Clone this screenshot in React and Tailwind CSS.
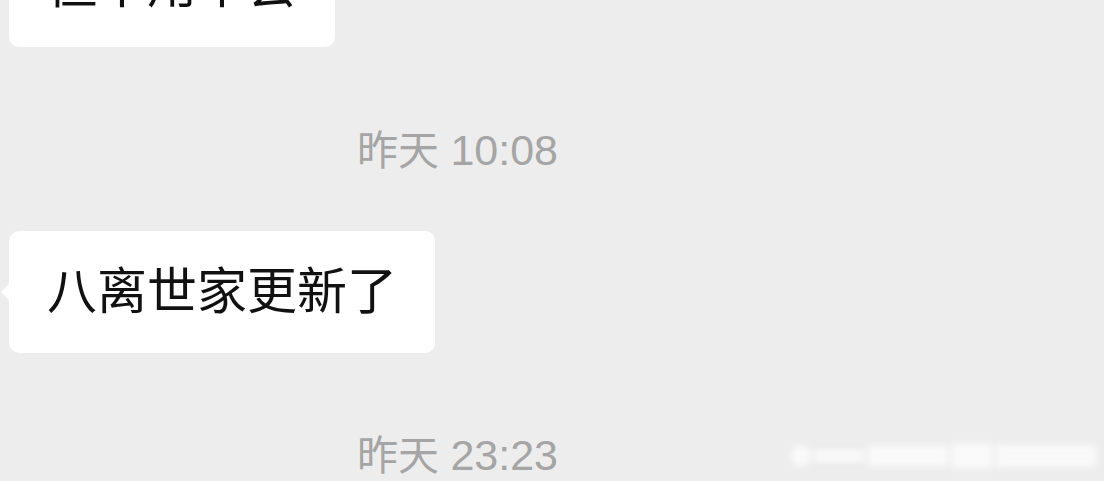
export default function App() {
  const cjk = { fontFamily: '"Liberation Sans", "Noto Sans CJK SC", sans-serif' };
  return (
    <div
      className="relative w-[1104px] h-[481px] overflow-hidden bg-[#ededed] flex flex-col items-start"
      style={cjk}
    >
      <div className="ml-[9px] mt-[-75px] rounded-[10px] bg-white px-[38px] py-[36px] text-[50px] leading-[50px] text-[#111111]">
        但不用不会
      </div>

      <div className="ml-[357px] mt-[82px] text-[41px] leading-[42px] text-[#a5a5a5] whitespace-nowrap">
        昨天 <span className="text-[43px]">10:08</span>
      </div>

      <div className="relative ml-[9px] mt-[59px] rounded-[10px] bg-white px-[38px] py-[36px] text-[50px] leading-[50px] text-[#111111]">
        <span className="absolute left-[-8px] top-1/2 -translate-y-1/2 w-0 h-0 border-y-[9px] border-y-transparent border-r-[9px] border-r-white" />
        八离世家更新了
      </div>

      <div className="ml-[357px] mt-[81px] text-[41px] leading-[42px] text-[#a5a5a5] whitespace-nowrap">
        昨天 <span className="text-[43px]">23:23</span>
      </div>

      <div className="absolute left-[792px] top-[444px] flex items-center gap-[4px] blur-[3px] opacity-70">
        <div className="w-[18px] h-[22px] rounded-full bg-white" />
        <div className="w-[50px] h-[12px] bg-white" />
        <div className="w-[80px] h-[20px] bg-white" />
        <div className="w-[40px] h-[24px] bg-white" />
        <div className="w-[100px] h-[22px] bg-white" />
      </div>
    </div>
  );
}
